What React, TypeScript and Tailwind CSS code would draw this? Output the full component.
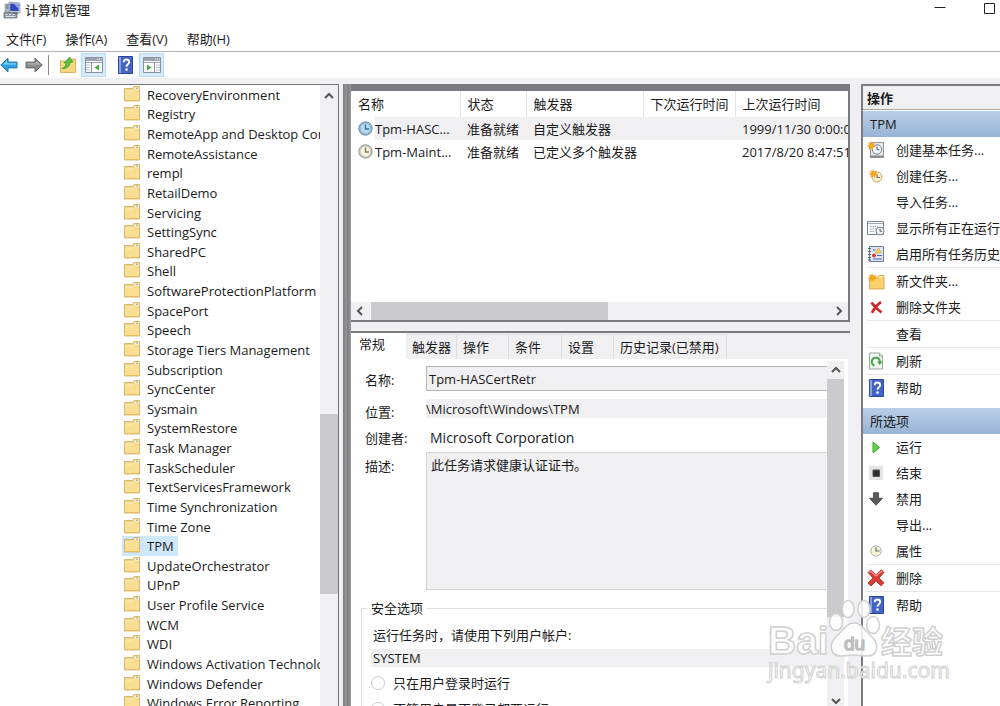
import * as React from "react"

const folders = [
  "RecoveryEnvironment",
  "Registry",
  "RemoteApp and Desktop Connections Update",
  "RemoteAssistance",
  "rempl",
  "RetailDemo",
  "Servicing",
  "SettingSync",
  "SharedPC",
  "Shell",
  "SoftwareProtectionPlatform",
  "SpacePort",
  "Speech",
  "Storage Tiers Management",
  "Subscription",
  "SyncCenter",
  "Sysmain",
  "SystemRestore",
  "Task Manager",
  "TaskScheduler",
  "TextServicesFramework",
  "Time Synchronization",
  "Time Zone",
  "TPM",
  "UpdateOrchestrator",
  "UPnP",
  "User Profile Service",
  "WCM",
  "WDI",
  "Windows Activation Technologies",
  "Windows Defender",
  "Windows Error Reporting",
]

const menus = ["文件(F)", "操作(A)", "查看(V)", "帮助(H)"]

const tabs = [
  { label: "触发器", width: "w-[51px]" },
  { label: "操作", width: "w-[52px]" },
  { label: "条件", width: "w-[53px]" },
  { label: "设置", width: "w-[52px]" },
  { label: "历史记录(已禁用)", width: "w-[113px]" },
]

function FolderIcon() {
  return (
    <svg width="16" height="16" viewBox="0 0 16 16" className="mb-0.5 shrink-0">
      <path d="M.5 2.500h8l1.500-2h5.500V15H.5z" fill="#f0d384" stroke="#d0ac5c" strokeWidth=".8" />
      <path d="M10.500 1.500h4.500V3h-4.500z" fill="#fff6da" />
      <path d="M12 2.200h2" stroke="#7fa3c0" />
      <path d="M1 5.500h14v9H1z" fill="#fadf92" />
      <path d="M1 5h8.500L11 3.800h4" fill="none" stroke="#fff3c8" />
      <path d="M1 14.500h14" stroke="#e5bd62" />
    </svg>
  )
}

function ComputerIcon() {
  return (
    <svg width="18" height="18" viewBox="0 0 18 18">
      <path d="M6 1l11 1v10H6z" fill="#c9cfda" stroke="#8a93a5" strokeWidth=".7" />
      <path d="M7.2 2.4l8.4.7v7H7.2z" fill="#2f49c0" />
      <path d="M11 3l4.6.2V8z" fill="#8ca6f2" />
      <path d="M2 3h4v9H2z" fill="#aeb6c4" stroke="#7c8494" strokeWidth=".6" />
      <path d="M3 5h2M3 7h2" stroke="#4a5365" strokeWidth=".8" />
      <path d="M1 11.5h13V17H1z" fill="#8f99a3" stroke="#626b75" strokeWidth=".7" />
      <path d="M2.5 13.5h2m1.5 0h2m1.5 0h2M2.5 15.5h10" stroke="#dde2e6" />
      <path d="M9 11h5l1.5 2H10z" fill="#6c7683" />
    </svg>
  )
}

function ArrowIcon({ back = false }: { back?: boolean }) {
  return back ? (
    <svg width="18" height="18" viewBox="0 0 18 18">
      <path d="M.8 9L8 2.2v3.9h9v5.8H8v3.9z" fill="#2fa3e6" stroke="#1c71ad" />
      <path d="M3 8.5L7 4.6v2.6h9v1.3z" fill="#7fd0fa" />
    </svg>
  ) : (
    <svg width="18" height="18" viewBox="0 0 18 18">
      <path d="M17.2 9L10 2.2v3.9H1v5.8h9v3.9z" fill="#8c8c8c" stroke="#656565" />
      <path d="M15 8.5L11 4.6v2.6H2v1.3z" fill="#b2b2b2" />
    </svg>
  )
}

function FolderUpIcon() {
  return (
    <svg width="18" height="18" viewBox="0 0 18 18">
      <path d="M1.500 5h8L11 3h5.500v13.500h-15z" fill="#f6d67c" stroke="#cfa647" strokeWidth=".8" />
      <path d="M3 12.500c2.600-1 4-3 4.300-5.500H5L10.500 1 14 6l-2.800.4c-.6 4-3.400 6.400-8.200 6.100z" fill="#5fbf46" stroke="#3c962d" strokeWidth=".7" />
    </svg>
  )
}

function ConsoleIcon({ right = false }: { right?: boolean }) {
  return (
    <svg width="18" height="16" viewBox="0 0 18 16">
      <path d="M.5.5h17v15H.5z" fill="#fafafa" stroke="#8a929c" />
      <path d="M1 1h16v3H1z" fill="#9aa3af" />
      <path d="M12 2h1m1 0h1m1 0h1" stroke="#fff" />
      <path d="M1 5.500h16" stroke="#9aa3af" />
      {right ? (
        <>
          <path d="M11.500 5.500v10" stroke="#8a929c" />
          <path d="M13.500 8h3m-3 2.500h3m-3 2.500h3" stroke="#8390a0" strokeDasharray="1 1" />
          <path d="M4 7.500v6l4.500-3z" fill="#49ab43" />
        </>
      ) : (
        <>
          <path d="M6.500 5.500v10" stroke="#8a929c" />
          <path d="M1.500 8h3m-3 2.500h3m-3 2.500h3" stroke="#8390a0" strokeDasharray="1 1" />
          <path d="M14 7.500v6l-4.500-3z" fill="#49ab43" />
        </>
      )}
    </svg>
  )
}

function HelpIcon() {
  return (
    <svg width="15" height="18" viewBox="0 0 15 18">
      <path d="M.5.5h14v17H.5z" fill="#4464c4" stroke="#2c4696" />
      <path d="M1 1h2v16H1z" fill="#8ba2e0" />
      <path d="M5.700 6.200c0-3.600 5.400-3.400 5.400-.2 0 2.200-2.600 2.300-2.600 4.800" fill="none" stroke="#fff" strokeWidth="1.900" />
      <circle cx="8.500" cy="13.600" r="1.300" fill="#fff" />
    </svg>
  )
}

function ClockIcon({ blue = false }: { blue?: boolean }) {
  return (
    <svg width="15" height="15" viewBox="0 0 15 15" className="shrink-0">
      <circle cx="7.500" cy="7.500" r="6.700" fill={blue ? "#8fb9d8" : "#cfccc8"} stroke={blue ? "#6f93ad" : "#9a9692"} />
      <circle cx="7.500" cy="7.500" r="4.700" fill={blue ? "#b9daf0" : "#f9f4e2"} />
      <path d="M7.500 3.500V8H11" fill="none" stroke={blue ? "#336f9c" : "#85764a"} strokeWidth="1.300" />
    </svg>
  )
}

function Spark() {
  return <path d="M4 0l1.100 2.400L8 1.500 6.800 4 9 5.500l-2.700.7L6 9 4 7.200 1.800 9l.1-2.800L0 5l2-1.200L1 1.300l2.300 1z" fill="#f5a623" />
}

function BasicTaskIcon() {
  return (
    <svg width="18" height="18" viewBox="0 0 18 18">
      <path d="M3.500 1.500h13v15h-13z" fill="#e9e9e9" stroke="#959595" />
      <path d="M3 15.500h13.500" stroke="#8a8a8a" strokeWidth="2" />
      <circle cx="10" cy="8.500" r="4.700" fill="#f3f8fc" stroke="#6f8297" />
      <path d="M10 5.500v3.200h2.500" fill="none" stroke="#4d5a68" />
      <Spark />
    </svg>
  )
}

function NewTaskIcon() {
  return (
    <svg width="14" height="14" viewBox="0 0 14 14">
      <circle cx="8" cy="8" r="5" fill="#faf0cc" stroke="#c9a85e" />
      <path d="M8 5v3.500h3" fill="none" stroke="#5c7386" strokeWidth="1.200" />
      <Spark />
    </svg>
  )
}

function RunningIcon() {
  return (
    <svg width="18" height="18" viewBox="0 0 18 18">
      <path d="M.5 2.500h16v13H.5z" fill="#f7f8f9" stroke="#7e8890" />
      <path d="M1 4.500h15" stroke="#a0a8b0" />
      <path d="M3 7.500h8M3 10h7M3 12.500h5" stroke="#98a3ad" strokeDasharray="1.500 1" />
      <circle cx="13" cy="12" r="4" fill="#eef1f4" stroke="#7e8890" />
      <path d="M13 9.500v2.700h2.200" fill="none" stroke="#57626c" />
    </svg>
  )
}

function HistoryIcon() {
  return (
    <svg width="16" height="18" viewBox="0 0 16 18">
      <path d="M1.500 1.500h14v15h-14z" fill="#dfe6f4" stroke="#6a7892" />
      <path d="M0 3.500h3M0 6.500h3M0 9.500h3M0 12.500h3M0 15h3" stroke="#59657c" />
      <path d="M10.500 3l3 5h-6z" fill="#f7d33c" stroke="#c7a01e" strokeWidth=".6" />
      <circle cx="6" cy="10.500" r="1.900" fill="#d33a32" />
      <path d="M5 5h2.500M9 10.500h5M5 14h9" stroke="#4a67b8" />
    </svg>
  )
}

function NewFolderIcon() {
  return (
    <svg width="17" height="17" viewBox="0 0 17 17">
      <path d="M1.500 4h8L11 2.500h5V16H1.500z" fill="#f8d16d" stroke="#cfa044" strokeWidth=".8" />
      <path d="M11 4h4" stroke="#fff4cc" strokeWidth="1.200" />
      <Spark />
    </svg>
  )
}

function CrossIcon() {
  return (
    <svg width="13" height="13" viewBox="0 0 13 13">
      <path d="M1.500 1.500c2 3 6 7 10 10M11 1.200C7.500 3.500 4 8 2 11.800" fill="none" stroke="#cc2a2a" strokeWidth="2.800" />
    </svg>
  )
}

function BigCrossIcon() {
  return (
    <svg width="18" height="18" viewBox="0 0 18 18">
      <path d="M1 3.500L4 1l5 4.800L14.500.800 17 3.500 12 9l5 4.800-3 3L9 12l-5 5-3-3 5-5z" fill="#dd3b35" stroke="#a8201f" strokeWidth=".8" />
      <path d="M2.500 3.500L4 2.300 9 7l5.500-4.700 1 1" fill="none" stroke="#f29a92" strokeWidth="1.200" />
    </svg>
  )
}

function RefreshIcon() {
  return (
    <svg width="14" height="18" viewBox="0 0 14 18">
      <path d="M.5 1h10l3 3v13H.5z" fill="#f1f7f0" stroke="#9aa79a" />
      <path d="M10.500 1v3h3" fill="none" stroke="#9aa79a" />
      <path d="M5.500 13.500A4 4 0 1 1 10.800 10" fill="none" stroke="#45a847" strokeWidth="2" />
      <path d="M8 9.500h5.500L10.700 13z" fill="#45a847" />
    </svg>
  )
}

function PlayIcon() {
  return (
    <svg width="9" height="13" viewBox="0 0 9 13">
      <path d="M1 1l6.500 5.500L1 12z" fill="#62d04e" stroke="#3fa832" />
    </svg>
  )
}

function StopIcon() {
  return (
    <svg width="14" height="14" viewBox="0 0 14 14">
      <path d="M0 0h14v14H0z" fill="#e4e4e4" />
      <path d="M4 4h6.500v6.500H4z" fill="#2d2d2d" stroke="#555" />
    </svg>
  )
}

function DownIcon() {
  return (
    <svg width="14" height="14" viewBox="0 0 14 14">
      <path d="M4.500.700h5v5.500h4L7 13.300.500 6.200h4z" fill="#5b5b5b" stroke="#404040" strokeWidth=".8" />
    </svg>
  )
}

function PropertiesIcon() {
  return (
    <svg width="12" height="12" viewBox="0 0 12 12">
      <circle cx="6" cy="6" r="5.200" fill="#fbf3cf" stroke="#a9b3ba" />
      <path d="M6 2.500V6h3.500" fill="none" stroke="#4c6c85" strokeWidth="1.200" />
    </svg>
  )
}

function Chevron({ dir }: { dir: "up" | "down" | "left" | "right" }) {
  const paths = {
    up: "M1 7l4-4 4 4",
    down: "M1 3l4 4 4-4",
    left: "M7 1L3 5l4 4",
    right: "M3 1l4 4-4 4",
  }
  return (
    <svg width="10" height="10" viewBox="0 0 10 10" className="shrink-0">
      <path d={paths[dir]} fill="none" stroke="#555" strokeWidth="2" />
    </svg>
  )
}

type Action = { label: string; icon?: React.ReactNode; line?: boolean }

const folderActions: Action[] = [
  { label: "创建基本任务...", icon: <BasicTaskIcon /> },
  { label: "创建任务...", icon: <NewTaskIcon /> },
  { label: "导入任务..." },
  { label: "显示所有正在运行的任务", icon: <RunningIcon /> },
  { label: "启用所有任务历史记录", icon: <HistoryIcon />, line: true },
  { label: "新文件夹...", icon: <NewFolderIcon /> },
  { label: "删除文件夹", icon: <CrossIcon />, line: true },
  { label: "查看", line: true },
  { label: "刷新", icon: <RefreshIcon />, line: true },
  { label: "帮助", icon: <HelpIcon /> },
]

const itemActions: Action[] = [
  { label: "运行", icon: <PlayIcon /> },
  { label: "结束", icon: <StopIcon /> },
  { label: "禁用", icon: <DownIcon /> },
  { label: "导出..." },
  { label: "属性", icon: <PropertiesIcon />, line: true },
  { label: "删除", icon: <BigCrossIcon />, line: true },
  { label: "帮助", icon: <HelpIcon /> },
]

function ActionGroup({ title, actions }: { title: string; actions: Action[] }) {
  return (
    <section className="mb-[7px]">
      <h3 className="flex h-[26px] items-center bg-linear-to-b from-[#b9cfe8] to-[#98b4d5] px-[7px]">{title}</h3>
      {actions.map((a) => (
        <React.Fragment key={a.label}>
          <button className="flex h-[26px] w-full items-center gap-[9px] pl-1">
            <span className="flex w-[18px] shrink-0 justify-center">{a.icon}</span>
            <span className="pl-0.5">{a.label}</span>
          </button>
          {a.line && <div className="ml-1 h-px bg-[#e6e6e6]" />}
        </React.Fragment>
      ))}
    </section>
  )
}

function Watermark() {
  return (
    <svg width="184" height="90" viewBox="0 0 184 90" className="pointer-events-none absolute right-[50px] bottom-4">
      <g fill="#fff" fillOpacity=".85" stroke="#d0d0d0" strokeWidth="1.500" strokeLinejoin="round">
        <ellipse cx="70" cy="22" rx="6.500" ry="8.500" />
        <ellipse cx="82" cy="9" rx="6" ry="8.500" />
        <ellipse cx="98" cy="9" rx="6" ry="8.500" />
        <ellipse cx="107" cy="25" rx="6.500" ry="8.500" />
        <path d="M88 23c8 0 11 8 17 13 9 8 7 20-4 20-5 0-8-1-13-1s-8 1-13 1c-11 0-13-12-4-20 6-5 9-13 17-13z" />
        <text x="2" y="54" fontSize="39" fontWeight="700" fontFamily="'Liberation Sans', sans-serif">Bai</text>
        <text x="78" y="50" fontSize="19" fontFamily="'Liberation Sans', sans-serif" fill="#e4e4e4" stroke="#bdbdbd">du</text>
        <text x="115" y="53" fontSize="31" fontWeight="700" fontFamily="'Noto Sans CJK SC', sans-serif">经验</text>
        <text x="2" y="78" fontSize="21" strokeWidth="1" fontFamily="'Noto Sans', sans-serif">jingyan.baidu.com</text>
      </g>
    </svg>
  )
}

export default function App() {
  return (
    <div className="relative flex h-screen flex-col overflow-hidden bg-white font-['Open_Sans','Noto_Sans_CJK_SC',sans-serif] text-[13px] leading-5 whitespace-nowrap text-[#1a1a1a]">
      <header className="flex h-5 shrink-0 items-center gap-1 pb-px pl-[3px]">
        <ComputerIcon />
        <h1>计算机管理</h1>
        <div className="ml-auto flex items-center gap-[38px] pr-1 pb-1">
          <button aria-label="最小化">
            <svg width="12" height="12" viewBox="0 0 12 12"><path d="M.5 5.500h11" stroke="#222" /></svg>
          </button>
          <button aria-label="最大化">
            <svg width="12" height="12" viewBox="0 0 12 12"><path d="M.5 1.500h10v10H.5z" fill="none" stroke="#222" /></svg>
          </button>
        </div>
      </header>

      <nav className="flex h-8 shrink-0 items-center gap-[19px] border-b border-[#b4b4b6] pt-1.5 pl-[6px]">
        {menus.map((m) => <button key={m}>{m}</button>)}
      </nav>

      <div className="flex h-[26px] shrink-0 items-center">
        <button aria-label="后退"><ArrowIcon back /></button>
        <button aria-label="前进" className="ml-[7px]"><ArrowIcon /></button>
        <div className="ml-[5px] h-5 w-px bg-[#8c8c8c]" />
        <button aria-label="上移" className="ml-[10px]"><FolderUpIcon /></button>
        <button aria-label="控制台树" className="ml-1 flex h-6 w-[25px] items-center justify-center border border-[#b9dcf5] bg-[#d5eafa]"><ConsoleIcon /></button>
        <button aria-label="帮助" className="ml-3"><HelpIcon /></button>
        <button aria-label="操作窗格" className="ml-1.5 flex h-6 w-[25px] items-center justify-center border border-[#b9dcf5] bg-[#d5eafa]"><ConsoleIcon right /></button>
      </div>

      <main className="flex min-h-0 flex-1 bg-[#f0eff1] pt-1.5">
        {/* folder tree */}
        <aside className="flex w-[339px] shrink-0 border-t border-r border-[#77777b] bg-white">
          <div className="flex min-w-0 flex-1 flex-col overflow-hidden pl-[122px]">
            <ul className="-mb-[7px] grid min-h-0 flex-1 auto-rows-fr">
              {folders.map((f) => (
                <li key={f} className="min-h-0">
                  <button className={`flex h-full items-center gap-[7px] pr-1 pl-0.5 ${f === "TPM" ? "bg-[#cfe7fa]" : ""}`}>
                    <FolderIcon />
                    <span>{f}</span>
                  </button>
                </li>
              ))}
            </ul>
          </div>
          <div className="flex w-[18px] flex-col items-center bg-[#f0eff1]">
            <div className="flex h-[22px] items-center"><Chevron dir="up" /></div>
            <div className="mt-[307px] h-[180px] w-full bg-[#cbcacd]" />
          </div>
        </aside>

        <div className="ml-1 flex min-w-0 flex-1 bg-linear-to-r from-[#7b7a7e] to-[#9a999d] bg-[length:4px] pl-2">
          <div className="flex min-w-0 flex-1 flex-col bg-[#f0eff1]">
            {/* task list */}
            <section className="flex h-[238px] shrink-0 flex-col border-t-[7px] border-r-2 border-b-2 border-[#7b7a7e] bg-white">
              <div className="min-h-0 flex-1 overflow-hidden">
                <table className="w-[620px] table-fixed text-left">
                  <colgroup>
                    <col className="w-[109px]" />
                    <col className="w-[66px]" />
                    <col className="w-[117px]" />
                    <col className="w-[92px]" />
                    <col />
                  </colgroup>
                  <thead>
                    <tr className="h-[26px]">
                      {["名称", "状态", "触发器", "下次运行时间", "上次运行时间"].map((h) => (
                        <th key={h} className="border-r border-[#e4e4e6] p-0 pl-[7px] font-normal">{h}</th>
                      ))}
                    </tr>
                  </thead>
                  <tbody>
                    <tr className="h-[23px] bg-[#f0eff1]">
                      <td className="p-0"><div className="flex items-center"><span className="bg-white py-1 pr-0.5 pl-[7px]"><ClockIcon blue /></span>Tpm-HASC...</div></td>
                      <td className="p-0 pl-[7px]">准备就绪</td>
                      <td className="p-0 pl-[7px]">自定义触发器</td>
                      <td />
                      <td className="p-0 pl-[7px]">1999/11/30 0:00:00</td>
                    </tr>
                    <tr className="h-[23px]">
                      <td className="p-0"><div className="flex items-center"><span className="py-1 pr-0.5 pl-[7px]"><ClockIcon /></span>Tpm-Maint...</div></td>
                      <td className="p-0 pl-[7px]">准备就绪</td>
                      <td className="p-0 pl-[7px]">已定义多个触发器</td>
                      <td />
                      <td className="p-0 pl-[7px]">2017/8/20 8:47:51</td>
                    </tr>
                  </tbody>
                </table>
              </div>
              <div className="flex h-[18px] items-center bg-[#f0eff1] pr-1 pl-1">
                <Chevron dir="left" />
                <div className="ml-1.5 h-full w-[237px] bg-[#cbcacd]" />
                <span className="ml-auto"><Chevron dir="right" /></span>
              </div>
            </section>

            {/* task details */}
            <section className="mt-[9px] flex min-h-0 flex-1 flex-col border-t-2 border-[#7b7a7e]">
              <div className="flex h-[26px] shrink-0 items-end" role="tablist">
                <button role="tab" aria-selected className="h-full w-[55px] bg-white pb-1 pl-2 text-left">常规</button>
                {tabs.map((t) => (
                  <button key={t.label} role="tab" className={`h-[25px] ${t.width} border-t border-r border-[#dedde0] pl-1.5 text-left`}>{t.label}</button>
                ))}
              </div>
              <div className="mr-0.5 flex min-h-0 flex-1 bg-white pr-1">
                <form className="min-w-0 flex-1 overflow-hidden pt-[7px] pl-2.5">
                  <div className="grid grid-cols-[61px_1fr] items-start pl-1">
                    <label htmlFor="name" className="pt-1">名称:</label>
                    <input id="name" readOnly defaultValue="Tpm-HASCertRetr" className="h-[25px] border border-r-0 border-[#b5b4b8] bg-[#f0eff1] px-0.5" />
                    <label htmlFor="path" className="pt-[11px]">位置:</label>
                    <input id="path" readOnly defaultValue="\Microsoft\Windows\TPM" className="mt-2 h-[19px] bg-[#f0eff1]" />
                    <span className="pt-1.5">创建者:</span>
                    <span className="pt-1.5 pl-1 text-sm">Microsoft Corporation</span>
                    <label htmlFor="desc" className="pt-2">描述:</label>
                    <textarea id="desc" readOnly defaultValue="此任务请求健康认证证书。" className="mt-1 h-[138px] resize-none border border-r-0 border-[#d5d4d8] bg-[#f0eff1] px-1 py-0.5" />
                  </div>
                  <fieldset className="mt-2 h-[180px] border border-r-0 border-[#dedde0] pl-[9px]">
                    <legend className="-ml-1 px-1">安全选项</legend>
                    <p className="mt-[7px] pl-0.5">运行任务时，请使用下列用户帐户:</p>
                    <p className="mt-1 h-[18px] bg-[#f0eff1] pl-0.5 leading-[18px]">SYSTEM</p>
                    <label className="mt-1.5 flex items-center gap-2">
                      <input type="radio" name="logon" className="size-[14px] appearance-none rounded-full border border-[#c9c9cc]" />
                      只在用户登录时运行
                    </label>
                    <label className="mt-1.5 flex items-center gap-2">
                      <input type="radio" name="logon" className="size-[14px] appearance-none rounded-full border border-[#c9c9cc]" />
                      不管用户是否登录都要运行
                    </label>
                  </fieldset>
                </form>
                <div className="mt-0.5 flex w-[17px] flex-col items-center bg-[#f0eff1]">
                  <div className="flex h-[18px] items-center"><Chevron dir="up" /></div>
                  <div className="h-[238px] w-full bg-[#cbcacd]" />
                  <span className="mt-auto"><Chevron dir="down" /></span>
                </div>
              </div>
            </section>
          </div>
        </div>

        {/* actions pane */}
        <aside className="ml-[11px] w-[139px] shrink-0 overflow-hidden border-t-2 border-l-2 border-[#7b7a7e] bg-white">
          <h2 className="mb-px flex h-[24px] items-center border-b border-[#a8a8ac] bg-[#f0eff1] pl-1 font-bold">操作</h2>
          <ActionGroup title="TPM" actions={folderActions} />
          <ActionGroup title="所选项" actions={itemActions} />
        </aside>
      </main>

      <Watermark />
    </div>
  )
}
